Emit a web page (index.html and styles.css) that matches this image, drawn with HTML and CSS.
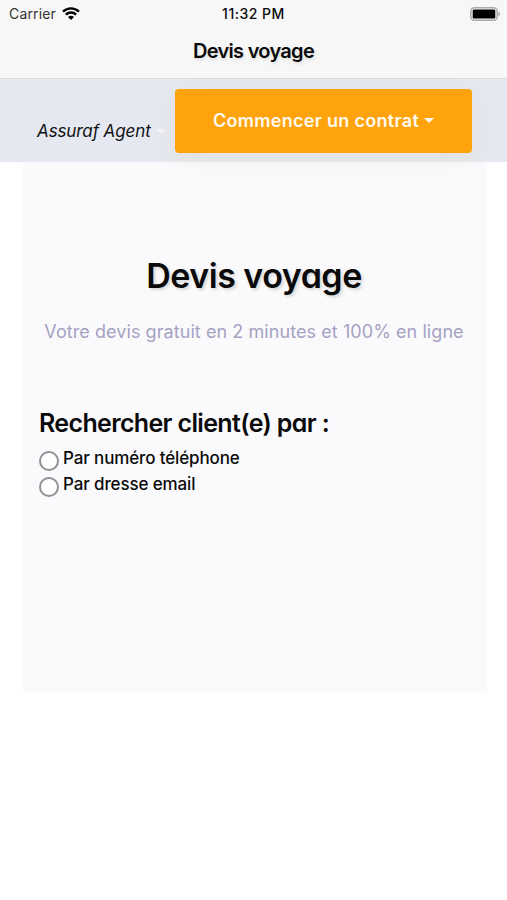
FILE: index.html
```html
<!DOCTYPE html>
<html lang="fr">
<head>
    <meta charset="UTF-8">
    <meta name="viewport" content="width=device-width, initial-scale=1.0">
    <title>Devis voyage</title>
    <link rel="stylesheet" href="styles.css">
</head>
<body>
    <!-- Header -->
    <header class="top">
        <div class="status-bar">
            <div class="carrier">
                <span>Carrier</span>
                <svg width="18" height="14" viewBox="0 0 18 14">
                    <path d="M1 4.6a11.6 11.6 0 0 1 16 0M3.8 7.6a7.5 7.5 0 0 1 10.4 0" fill="none" stroke="#000" stroke-width="2.3"/>
                    <path d="M9 13L6 10.1a4.3 4.3 0 0 1 6 0z"/>
                </svg>
            </div>
            <div class="clock">11:32 PM</div>
            <svg class="battery" width="31" height="14" viewBox="0 0 31 14">
                <rect x="0.8" y="0.8" width="26.4" height="12.4" rx="3.6" fill="#f7f7f7" stroke="#aaa" stroke-width="1.5"/>
                <rect x="2.7" y="2.6" width="22.6" height="8.8" rx="1.2"/>
                <path d="M28.4 4.6q3.6 2.4 0 4.8z" fill="#aaa"/>
            </svg>
        </div>
        <div class="nav-title">Devis voyage</div>
    </header>

    <!-- Agent bar -->
    <nav class="agent-bar">
        <div class="agent"><span class="agent-name">Assuraf Agent</span><span class="caret"></span></div>
        <button class="start"><span class="start-label">Commencer un contrat</span><span class="caret"></span></button>
    </nav>

    <!-- Main Content -->
    <main class="quote">
        <h1>Devis voyage</h1>
        <p class="subtitle">Votre devis gratuit en 2 minutes et 100% en ligne</p>
        <h2>Rechercher client(e) par :</h2>
        <label class="choice"><input type="radio" name="search"><span>Par numéro téléphone</span></label>
        <label class="choice"><input type="radio" name="search"><span>Par dresse email</span></label>
    </main>
</body>
</html>
```
FILE: styles.css
```css
* {
    margin: 0;
    padding: 0;
    box-sizing: border-box;
}

body {
    background-color: #fff;
    color: #0a0a0a;
    font-family: Inter, "Liberation Sans", sans-serif;
}

/* Header */
.top {
    height: 79px;
    background-color: #f7f7f7;
    border-bottom: 1px solid #dcdcde;
}

.status-bar {
    display: grid;
    grid-template-columns: 1fr auto 1fr;
    align-items: center;
    height: 27px;
    padding: 0 6px 0 9px;
    font-size: 14px;
    line-height: 27px;
}

.carrier {
    display: flex;
    align-items: center;
    gap: 6px;
    color: #333;
    letter-spacing: 0.15px;
}

.clock {
    margin-left: -3px;
    font-size: 14px;
    font-weight: 500;
    letter-spacing: 0.5px;
}

.battery {
    justify-self: end;
}

.nav-title {
    height: 51px;
    font-size: 20px;
    font-weight: 600;
    line-height: 49px;
    letter-spacing: -0.7px;
    text-align: center;
    text-shadow: 1px 2px 3px #ddd;
}

/* Agent bar */
.agent-bar {
    display: flex;
    align-items: flex-start;
    height: 83px;
    padding: 10px 35px 0 37px;
    background-color: #e5e8f0;
}

.agent {
    display: flex;
    align-items: center;
    gap: 5px;
    width: 138px;
    padding-top: 30px;
    color: #f4f5f8;
}

.agent-name {
    color: #111;
    font-size: 17px;
    font-style: italic;
    line-height: 24px;
    letter-spacing: -0.1px;
    white-space: nowrap;
    font-feature-settings: "cv11";
}

.caret {
    border: 5px solid transparent;
    border-top-color: currentColor;
    border-bottom: 0;
}

.start {
    display: flex;
    align-items: center;
    justify-content: center;
    gap: 5px;
    width: 297px;
    height: 64px;
    padding-bottom: 2px;
    border: 0;
    border-radius: 4px;
    background-color: #ffa30c;
    color: #fffaf0;
    font-family: inherit;
    font-size: 18px;
    font-weight: 600;
    letter-spacing: 0.3px;
    white-space: nowrap;
    box-shadow: 0 8px 22px rgba(225, 190, 140, 0.16);
}

/* Quote form */
.quote {
    height: 530px;
    margin: 0 20px 0 23px;
    padding: 90px 16px 0;
    background-color: #fafafd;
}

h1 {
    margin-left: -2px;
    font-size: 34px;
    font-weight: 600;
    line-height: 48px;
    letter-spacing: -0.5px;
    text-align: center;
    white-space: nowrap;
    text-shadow: 2px 2px 3px #d6d6d6;
    font-feature-settings: "cv11";
}

.subtitle {
    margin: 18px 2px 0 0;
    color: #a6a2c2;
    font-size: 18px;
    line-height: 28px;
    letter-spacing: 0.07px;
    text-align: center;
    white-space: nowrap;
}

h2 {
    margin: 60px 0 7px;
    font-size: 25px;
    font-weight: 600;
    line-height: 34px;
    letter-spacing: -0.65px;
    white-space: nowrap;
    font-feature-settings: "cv11";
}

.choice {
    display: flex;
    align-items: flex-start;
    gap: 4px;
    height: 26px;
    font-size: 17px;
    font-weight: 500;
    line-height: 22px;
    letter-spacing: -0.13px;
    white-space: nowrap;
}

.choice input {
    width: 20px;
    height: 20px;
    margin-top: 4px;
    border: 2px solid #909095;
    border-radius: 50%;
    background-color: #fff;
    appearance: none;
}
```
